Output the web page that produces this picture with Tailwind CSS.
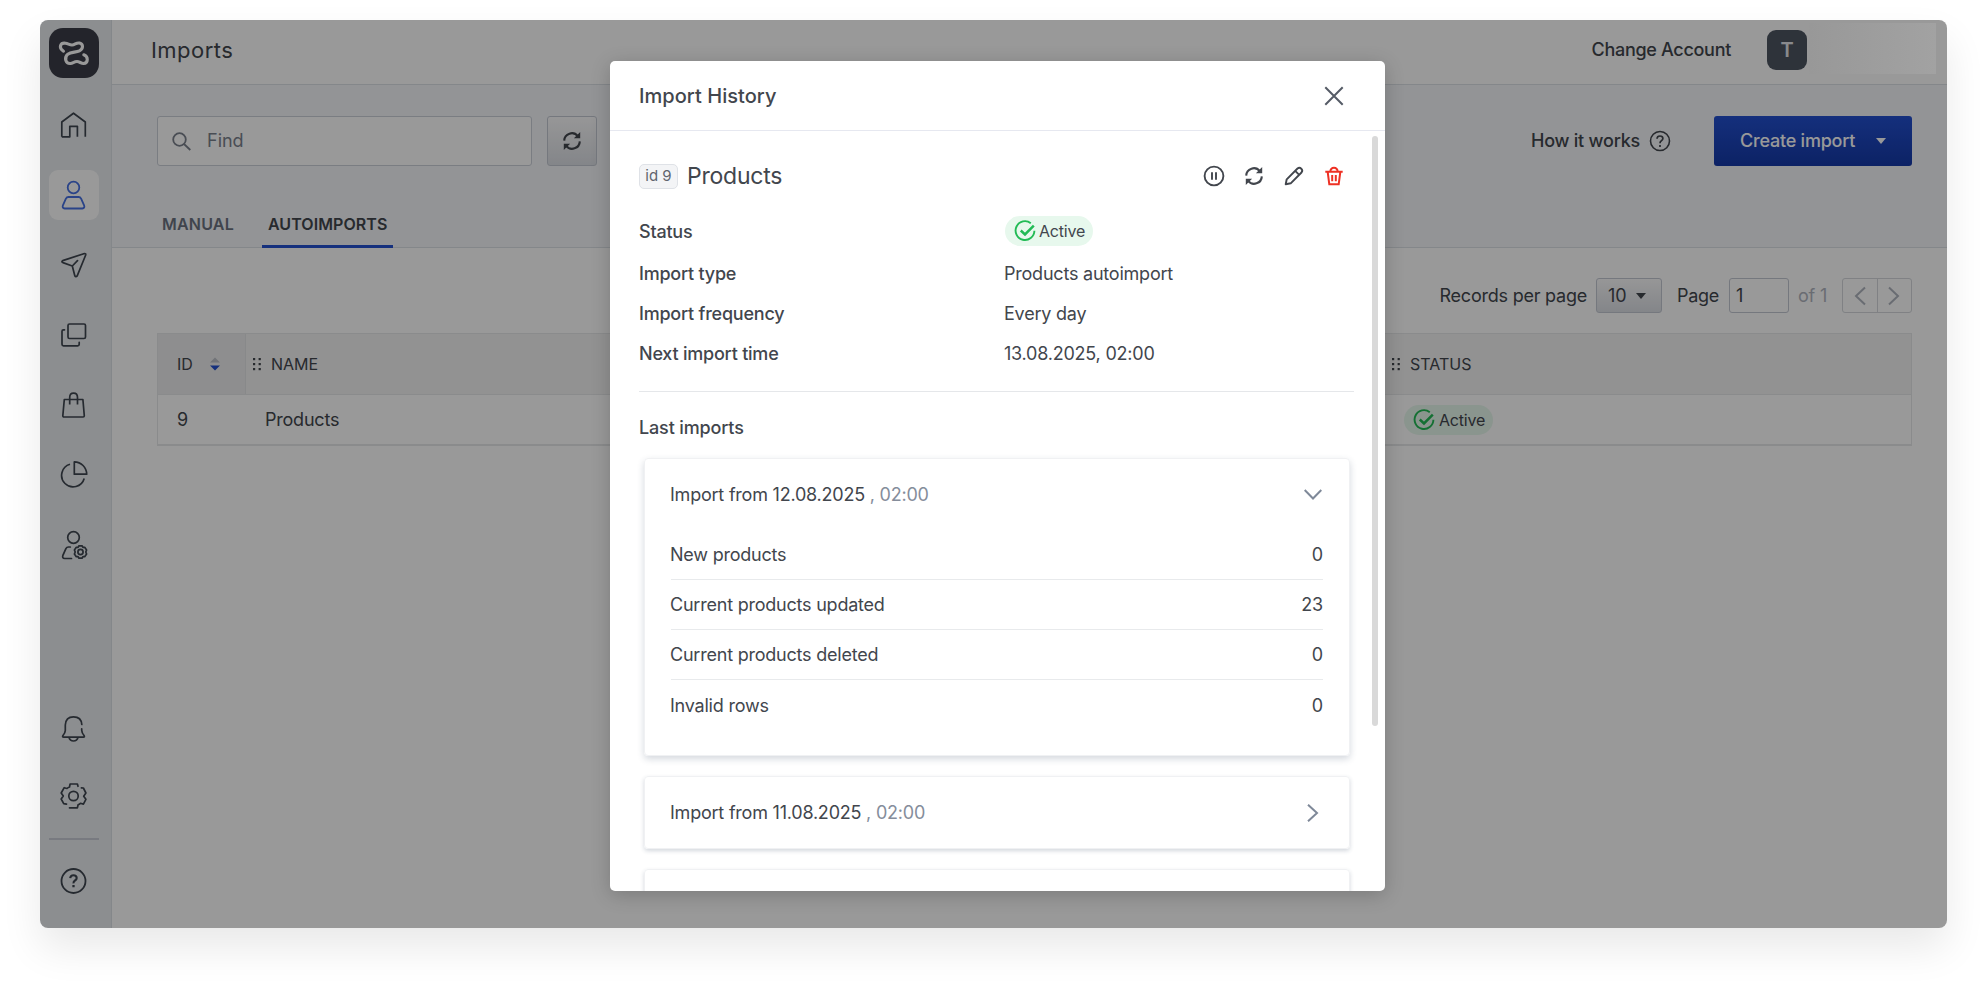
<!DOCTYPE html>
<html lang="en">
<head>
<meta charset="utf-8">
<title>Imports</title>
<script src="https://cdn.jsdelivr.net/npm/@tailwindcss/browser@4"></script>
</head>
<body class="h-[988px] w-[1987px] overflow-hidden bg-white pt-5 pl-10 font-['Inter',sans-serif] text-[18px] leading-6 tracking-[-0.22px] text-[#42464d]">

<svg class="hidden">
  <symbol id="refresh" viewBox="0 0 20 20"><path d="M2.200 9.600A7.600 7.600 0 0 1 15.800 5.200M17.800 10.400A7.600 7.600 0 0 1 4.200 14.800" fill="none" stroke="currentColor" stroke-width="2.100"/><path d="M18.200 1v6.300h-6.300zM1.800 19v-6.300h6.300z" fill="currentColor"/></symbol>
  <symbol id="dots" viewBox="0 0 9 14"><g fill="currentColor"><rect x="0" y="1" width="2.200" height="2.200"/><rect x="5.600" y="1" width="2.200" height="2.200"/><rect x="0" y="6" width="2.200" height="2.200"/><rect x="5.600" y="6" width="2.200" height="2.200"/><rect x="0" y="11" width="2.200" height="2.200"/><rect x="5.600" y="11" width="2.200" height="2.200"/></g></symbol>
  <symbol id="check" viewBox="0 0 22 22"><g fill="none" stroke="#22bb55"><path d="M16.800 3.200A9.400 9.400 0 1 0 20.400 10.800" stroke-width="1.900"/><path d="M6.800 10.500l4.200 4L19.800 5.600" stroke-width="2.500"/></g></symbol>
</svg>

<div class="relative flex h-[908px] w-[1907px] overflow-hidden rounded-lg bg-white shadow-[0_20px_40px_rgba(0,0,0,0.09)]">

  <!-- Sidebar -->
  <aside class="flex w-18 shrink-0 flex-col items-center border-r border-[#dde1e6] bg-[#eaedf0] pt-2 pr-[3px] text-[#3f4650]">
    <div class="flex size-[50px] items-center justify-center rounded-[14px] bg-[#3b3d48]">
      <svg class="size-[50px]" viewBox="0 0 50 50" fill="none" stroke="#fff" stroke-width="3.100" stroke-linecap="round" stroke-linejoin="round"><path d="M14.500 23.200C9 19.500 11.500 14.500 16.500 15.200C19 15.500 20.500 17 23 17C26 17 27 14.500 30.500 15C34.500 16 34.500 21 30.500 22.800C27 24.500 22 23.800 18.800 26.200C14.500 30 17 36 21.500 35.500C24 35.200 25 33.500 28 33.500C30.500 33.500 32 35.500 34.500 35.500C39.500 35 39.500 28.500 34.800 26.800"/></svg>
    </div>
    <nav class="mt-[22px] flex flex-col gap-5">
      <div class="flex size-[50px] items-center justify-center"><svg class="size-7" viewBox="0 0 28 28" fill="none" stroke="currentColor" stroke-width="1.700" stroke-linejoin="round"><path d="M1.800 25.800V11L13.500 2.200 25.300 11v14.800M1.800 25.800h8V15.300h7.600v10.500"/></svg></div>
      <div class="flex size-[50px] items-center justify-center rounded-[9px] bg-white text-[#4671e3]"><svg class="h-[30px] w-7" viewBox="0 0 28 30" fill="none" stroke="currentColor" stroke-width="1.800" stroke-linejoin="round"><circle cx="13.500" cy="7.500" r="5.800"/><path d="M8.500 17h10q1.800 0 2.600 1.600l3 6.700q1 2.900-1.800 3.200H4.700q-2.800-.3-1.800-3.200l3-6.700Q6.700 17 8.500 17z"/></svg></div>
      <div class="flex size-[50px] items-center justify-center"><svg class="size-7" viewBox="0 0 28 28" fill="none" stroke="currentColor" stroke-width="1.700" stroke-linejoin="round" stroke-linecap="round"><path d="M24.500 2.500L2.700 9.600q-1.600 1 .2 2L12.300 15l2.500 9.700q1 1.600 2.400.2L25.700 4q.3-1.500-1.200-1.500zM12.300 15L17.500 9.700"/></svg></div>
      <div class="flex size-[50px] items-center justify-center"><svg class="size-7" viewBox="0 0 28 28" fill="none" stroke="currentColor" stroke-width="1.700" stroke-linecap="round"><rect x="8" y="3" width="17.500" height="14.500" rx="1.500"/><path d="M4.500 8.800H3.400q-1.400 0-1.400 1.400v13.100q0 1.500 1.500 1.500h14.200q1.500 0 1.500-1.500v-2"/></svg></div>
      <div class="flex size-[50px] items-center justify-center"><svg class="size-7" viewBox="0 0 28 28" fill="none" stroke="currentColor" stroke-width="1.700" stroke-linejoin="round"><path d="M4.300 8.500h18.600l1.400 16.300q0 1.200-1.200 1.200H4q-1.200 0-1.200-1.200zM9.700 13.500V6.500q0-4.300 3.900-4.300t3.900 4.300v7"/></svg></div>
      <div class="flex size-[50px] items-center justify-center"><svg class="size-7" viewBox="0 0 28 28" fill="none" stroke="currentColor" stroke-width="1.700" stroke-linejoin="round"><path d="M10 3.300A11.500 11.500 0 1 0 24.200 17.500M14.300.9v12.300h12.400C26.500 6.200 21.300 1.100 14.300.9z"/></svg></div>
      <div class="flex size-[50px] items-center justify-center"><svg class="h-[30px] w-7" viewBox="0 0 28 30" fill="none" stroke="currentColor" stroke-width="1.700" stroke-linecap="round"><circle cx="13.500" cy="7.500" r="5.800"/><path d="M10.300 17H8.500q-1.800 0-2.600 1.600l-3 6.700q-1 2.900 1.800 3.200h6.800"/><circle cx="20.500" cy="22" r="2.600"/><path d="M19 15.800h3l.9 1.500 1.800 0 1.900 2.600-.8 2.100.8 2.100-1.900 2.600-1.800 0-.9 1.500h-3l-.9-1.500-1.800 0-1.900-2.600.8-2.100-.8-2.100 1.900-2.600 1.800 0z" stroke-linejoin="round"/></svg></div>
    </nav>
    <div class="mt-[145px] flex flex-col items-center">
      <svg class="size-7" viewBox="0 0 28 28" fill="none" stroke="currentColor" stroke-width="1.700" stroke-linejoin="round" stroke-linecap="round"><path d="M21.800 9.500Q21.300 1.800 13.500 1.800T5.300 10v5.500q0 2-2.500 5.300-.6 1.300.8 1.300H23.500q1.300 0 .7-1.300-2.400-2.800-2.500-5.500v-1.500M9 22.500q1 3.500 4.500 3.500t4.500-3.500"/></svg>
      <svg class="mt-[39px] size-7" viewBox="0.5 0 28 28" fill="none" stroke="currentColor" stroke-width="1.700" stroke-linejoin="round" stroke-linecap="round"><circle cx="14" cy="14" r="4.700"/><path d="M18.500 4.300l-.6-2.300h-7.300L10 5q-1.500.5-2.500 1.500L4.700 5.700 1.700 11 3.800 14l-2.100 3 2.500 4.700 2.800.4"/><path d="M10 25.800h7.900l.7-3q1.300-.6 2.300-1.500l3 .8 2.500-4.800-2.200-3.100 2.200-3.200-2.500-5-2-.2"/></svg>
      <div class="mt-7 h-0.5 w-[50px] bg-[#c8ccd6]"></div>
      <svg class="mt-[27px] size-7" viewBox="0.5 0 28 28" fill="none" stroke="currentColor" stroke-width="1.800"><circle cx="14" cy="14" r="12"/><path d="M10.700 11.200Q11 8.300 14 8.300t3.200 2.700q0 1.500-1.700 2.500T14 16.300" stroke-width="2.100"/><path d="M14 18v2.300" stroke-width="2.300"/></svg>
    </div>
  </aside>

  <div class="flex flex-1 flex-col">
    <!-- Top bar -->
    <header class="flex h-[65px] items-center justify-between border-b border-[#dde1e6] pr-[140px] pb-[4px] pl-[39px]">
      <h1 class="text-[22px] leading-7 tracking-[0.450px]">Imports</h1>
      <div class="flex items-center gap-[36px] font-medium">
        <span class="tracking-[-0.300px]">Change Account</span>
        <span class="flex h-10 w-10 items-center justify-center rounded-[9px] bg-[#4d5562] text-[20px] font-semibold text-[#e5e7eb]">T</span>
      </div>
    </header>

    <!-- Toolbar and tabs -->
    <section class="flex h-[163px] flex-col justify-between border-b border-[#dde1e6] bg-[#f5f7fa] pt-[31px] pr-[35px] pl-[45px]">
      <div class="flex h-[50px] items-center">
        <div class="flex h-[50px] w-[375px] items-center gap-[16px] rounded-[3px] border border-[#cbd0d9] bg-white pl-[14px] text-[#7b818c]">
          <svg class="size-[19px]" viewBox="0 0 19 19" fill="none" stroke="currentColor" stroke-width="1.800"><circle cx="7.500" cy="7.500" r="6.300"/><path d="M12 12l6.300 6"/></svg>
          <span class="tracking-normal">Find</span>
        </div>
        <div class="ml-[15px] flex size-[50px] items-center justify-center rounded-[3px] border border-[#c4c9d3] bg-gradient-to-b from-[#fbfbfc] to-[#dcdfe5]"><svg class="size-5"><use href="#refresh"/></svg></div>
        <div class="ml-auto flex items-center gap-[9px] font-medium"><span>How it works</span>
          <svg class="size-[22px]" viewBox="0 0 22 22" fill="none" stroke="currentColor" stroke-width="1.600"><circle cx="11" cy="11" r="9.500"/><path d="M8 8.700Q8.200 6 11 6t2.900 2.500q0 1.300-1.500 2.200T11 13.200M11 15v2" stroke-width="1.700"/></svg>
        </div>
        <div class="ml-[43px] flex h-[50px] w-[198px] items-center justify-between rounded-[3px] bg-gradient-to-b from-[#2350d0] to-[#1539a8] pr-[26px] pl-[26px] font-medium text-white"><span>Create import</span><svg class="h-1.5 w-[10px]" viewBox="0 0 10 6" fill="#fff"><path d="M0 0h10L5 6z"/></svg></div>
      </div>
      <div class="flex h-[35px] gap-[28px] pl-[5px] text-[16px] font-semibold text-[#6b7280]">
        <span class="tracking-[0.200px]">MANUAL</span>
        <span class="-mb-px border-b-3 border-[#2350d0] px-[6px] tracking-[0.080px] text-[#42464d]">AUTOIMPORTS</span>
      </div>
    </section>

    <!-- Paging -->
    <section class="flex flex-col pr-[35px] pl-[45px]">
      <div class="mt-[30px] flex h-[35px] items-center justify-end">
        <span>Records per page</span>
        <div class="ml-[9px] flex h-[35px] w-[66px] items-center justify-between rounded-[3px] border border-[#c4c9d3] bg-gradient-to-b from-[#fbfbfc] to-[#dcdfe5] pr-[15px] pl-[11px]"><span>10</span><svg class="h-1.5 w-[10px]" viewBox="0 0 10 6" fill="currentColor"><path d="M0 0h10L5 6z"/></svg></div>
        <span class="ml-[15px] tracking-[-0.300px]">Page</span>
        <div class="ml-[10px] flex h-[35px] w-[60px] items-center rounded-[3px] border border-[#c4c9d3] pl-[6px]">1</div>
        <span class="ml-[9px] text-[#b0b5bf]">of 1</span>
        <div class="ml-[15px] flex h-[35px] w-[70px] rounded-[3px] border border-[#d5d8dd] text-[#b0b5bf]">
          <div class="flex flex-1 items-center justify-center border-r border-[#d5d8dd]"><svg class="h-5 w-3" viewBox="0 0 12 20" fill="none" stroke="currentColor" stroke-width="2"><path d="M11 1.500L2 10l9 8.500"/></svg></div>
          <div class="flex flex-1 items-center justify-center"><svg class="h-5 w-3" viewBox="0 0 12 20" fill="none" stroke="currentColor" stroke-width="2"><path d="M1 1.500L10 10l-9 8.500"/></svg></div>
        </div>
      </div>

      <!-- Table -->
      <div class="mt-5 border border-b-2 border-[#e6e8ea]">
        <div class="flex h-[61px] border-b border-[#e6e8ea] bg-[#f3f3f4] text-[16px] tracking-normal">
          <div class="flex w-[88px] items-center gap-[17px] border-r border-[#e3e4e6] bg-[#ededee] pl-[19px]"><span>ID</span><svg class="h-[14px] w-[10px]" viewBox="0 0 10 14"><path d="M0 5.500h10L5 .5z" fill="#bcc0c8"/><path d="M0 8.500h10L5 13.500z" fill="#2350d0"/></svg></div>
          <div class="flex w-[1139px] items-center gap-[9px] pl-[7px]"><svg class="h-[14px] w-[9px]"><use href="#dots"/></svg><span>NAME</span></div>
          <div class="flex items-center gap-[9px] pl-[7px]"><svg class="h-[14px] w-[9px]"><use href="#dots"/></svg><span>STATUS</span></div>
        </div>
        <div class="flex h-[49px] items-center">
          <span class="w-[107px] pl-[19px]">9</span>
          <span class="w-[1139px]">Products</span>
          <span class="flex h-[30px] w-[89px] items-center gap-[4px] rounded-full bg-[#e7f8ed] pl-[9px] text-[16px] tracking-[-0.200px]"><svg class="size-[22px]"><use href="#check"/></svg>Active</span>
        </div>
      </div>
    </section>
  </div>

  <!-- Dimmed backdrop -->
  <div class="absolute inset-0 bg-black/40"></div>
  <div class="absolute top-[3px] left-[1769px] h-[51px] w-[127px] bg-gradient-to-r from-[#989898] to-[#a2a2a2]"></div>

  <!-- Dialog -->
  <div class="absolute top-[41px] left-[570px] flex h-[830px] w-[775px] flex-col overflow-hidden rounded-[5px] bg-white shadow-[0_4px_20px_rgba(0,0,0,0.2)]">
    <div class="flex h-[70px] shrink-0 items-center justify-between border-b border-[#e6e8f0] pr-[41px] pl-[29px]">
      <h2 class="text-[20px] font-medium tracking-[0.050px]">Import History</h2>
      <svg class="size-5" viewBox="0 0 20 20" fill="none" stroke="#555b66" stroke-width="2"><path d="M1.300 1.300l17.400 17.400M18.700 1.300L1.300 18.700"/></svg>
    </div>
    <div class="flex flex-col pr-[31px] pl-[29px]">
      <div class="mt-[29px] flex h-8 items-center">
        <span class="flex h-[25px] w-[39px] items-center justify-center rounded-[5px] border border-[#dfe2e7] bg-[#f3f4f6] text-[15px] tracking-normal text-[#60656e]">id 9</span>
        <h3 class="ml-[9px] text-[23px] leading-8">Products</h3>
        <div class="ml-auto flex items-center gap-[18px] pr-[9px]">
          <svg class="size-[22px]" viewBox="0 0 22 22" fill="none" stroke="currentColor" stroke-width="1.900"><circle cx="11" cy="11" r="9.400"/><path d="M9 7.200v7.600M13 7.200v7.600"/></svg>
          <svg class="size-[22px] p-px"><use href="#refresh"/></svg>
          <svg class="size-[22px]" viewBox="0 0 22 22" fill="none" stroke="currentColor" stroke-width="1.900" stroke-linejoin="round"><path d="M2.700 19.300l1-5L14.500 3.500q2-1.500 3.800.2t.2 3.800L7.700 18.300zM12.200 5.800l4 4"/></svg>
          <svg class="size-[22px]" viewBox="0 0 22 22" fill="none" stroke="#ee3124" stroke-width="2"><path d="M2.300 6.700h17.400M4.700 7l1.600 12.300h9.400L17.300 7M7.300 6.500q.5-3.700 3.700-3.700t3.700 3.700M9.200 10v6.300M12.800 10v6.300"/></svg>
        </div>
      </div>
      <dl class="mt-[23px] flex flex-col">
        <div class="flex h-[32px] items-center"><dt class="w-[366px] pt-[2px] font-medium">Status</dt><dd class="flex h-[30px] w-[88px] items-center gap-[3px] rounded-full bg-[#e7f8ed] pl-[9px] text-[16px] tracking-[-0.200px]"><svg class="size-[22px]"><use href="#check"/></svg>Active</dd></div>
        <div class="mt-[7px] flex h-10 items-center"><dt class="w-[365px] font-medium">Import type</dt><dd>Products autoimport</dd></div>
        <div class="flex h-10 items-center"><dt class="w-[365px] font-medium">Import frequency</dt><dd>Every day</dd></div>
        <div class="flex h-10 items-center"><dt class="w-[365px] font-medium">Next import time</dt><dd>13.08.2025, 02:00</dd></div>
      </dl>
      <div class="mt-[17px] border-t border-[#e5e7ea]"></div>
      <h4 class="mt-6 font-medium tracking-[-0.150px]">Last imports</h4>
      <div class="mt-[18px] mr-[4px] ml-[5px] h-[298px] rounded-[4px] border border-[#f0f1f3] pr-[26px] pl-[26px] shadow-[0_3px_7px_rgba(40,60,90,0.2)]">
        <div class="flex h-[72px] items-center justify-between pr-px"><span class="-ml-px">Import from 12.08.2025 <span class="text-[#858d9b]">, 02:00</span></span><svg class="h-3 w-[18px]" viewBox="0 0 18 12" fill="none" stroke="#7f8999" stroke-width="2"><path d="M.7 1L9 9.500 17.300 1"/></svg></div>
        <div class="flex h-[49px] items-center justify-between border-b border-[#e8eaec]"><span class="-ml-px">New products</span><span>0</span></div>
        <div class="flex h-[50px] items-center justify-between border-b border-[#e8eaec]"><span class="-ml-px">Current products updated</span><span>23</span></div>
        <div class="flex h-[50px] items-center justify-between border-b border-[#e8eaec]"><span class="-ml-px">Current products deleted</span><span>0</span></div>
        <div class="flex h-[52px] items-center justify-between"><span class="-ml-px">Invalid rows</span><span>0</span></div>
      </div>
      <div class="mt-5 mr-[4px] ml-[5px] flex h-[73px] items-center justify-between rounded-[4px] border border-[#f0f1f3] pr-[30px] pl-[26px] shadow-[0_2px_4px_rgba(40,60,90,0.2)]"><span class="-ml-px">Import from 11.08.2025 <span class="text-[#858d9b]">, 02:00</span></span><svg class="h-[18px] w-3" viewBox="0 0 12 18" fill="none" stroke="#7f8999" stroke-width="2"><path d="M1 .7L10 9 1 17.300"/></svg></div>
      <div class="mt-5 mr-[4px] ml-[5px] h-[73px] rounded-[4px] border border-[#f0f1f3] shadow-[0_2px_4px_rgba(40,60,90,0.2)]"></div>
    </div>
    <div class="absolute top-[75px] right-[7px] h-[590px] w-[6px] rounded-full bg-[#d9d9d9]"></div>
  </div>
</div>
</body>
</html>
